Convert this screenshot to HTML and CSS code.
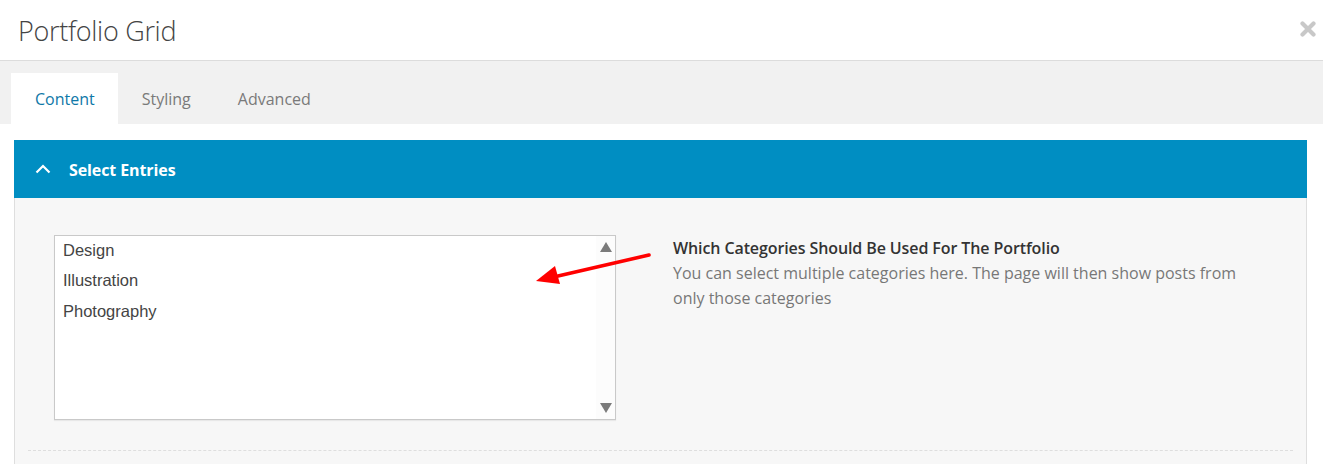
FILE: index.html
```html
<!DOCTYPE html>
<html>
<head>
<meta charset="utf-8">
<link rel="stylesheet" href="styles.css">
</head>
<body>
<div class="header">
  <h1 class="title">Portfolio Grid</h1>
  <svg class="close" width="16" height="16" viewBox="0 0 16 16"><path d="M2.5 2.5 L13.5 13.5 M13.5 2.5 L2.5 13.5" stroke="#c8c8c8" stroke-width="4.2" stroke-linecap="round"/></svg>
</div>
<div class="tabs">
  <div class="tab active">Content</div>
  <div class="tab">Styling</div>
  <div class="tab">Advanced</div>
</div>
<div class="main">
  <div class="section-bar">
    <svg class="chev" width="16" height="10" viewBox="0 0 16 10"><path d="M1.5 8.5 L8 2 L14.5 8.5" fill="none" stroke="#fff" stroke-width="2.2"/></svg>
    <span class="section-title">Select Entries</span>
  </div>
  <div class="panel">
    <div class="row">
      <div class="listbox">
        <div class="options">
          <div class="opt">Design</div>
          <div class="opt">Illustration</div>
          <div class="opt">Photography</div>
        </div>
        <div class="scroll">
          <svg width="12" height="10" viewBox="0 0 12 10"><path d="M6 0 L12 10 L0 10 Z" fill="#7b7b7b"/></svg>
          <svg width="12" height="10" viewBox="0 0 12 10"><path d="M0 0 L12 0 L6 10 Z" fill="#7b7b7b"/></svg>
        </div>
      </div>
      <div class="desc">
        <div class="desc-title">Which Categories Should Be Used For The Portfolio</div>
        <div class="desc-text">You can select multiple categories here. The page will then show posts from only those categories</div>
      </div>
      <svg class="arrow" width="120" height="34" viewBox="0 0 120 34"><path d="M113 3 L22 24" stroke="#f00" stroke-width="3.6" stroke-linecap="round"/><path d="M0 29 L19 14 L24 32 Z" fill="#f00"/></svg>
    </div>
    <div class="divider"></div>
  </div>
</div>
</body>
</html>
```
FILE: styles.css
```css
html, body {
  margin: 0;
  padding: 0;
  background: #fff;
  overflow: hidden;
}
body {
  font-family: "Open Sans", sans-serif;
  width: 1323px;
  height: 464px;
}
.header {
  height: 60px;
  border-bottom: 1px solid #dcdcdc;
  display: flex;
  align-items: center;
  justify-content: space-between;
  padding: 0 7px 0 18px;
  box-sizing: content-box;
}
.title {
  margin: 0;
  font-weight: 300;
  font-size: 27px;
  color: #444;
  letter-spacing: -0.3px;
  padding-bottom: 0;
}
.close {
  margin-bottom: 3px;
}
.tabs {
  background: #f1f1f1;
  height: 51px;
  padding: 12px 0 0 11px;
  display: flex;
}
.tab {
  font-size: 16px;
  color: #7a7a7a;
  padding: 0 23px 0 24px;
  line-height: 53px;
  height: 51px;
  box-sizing: border-box;
}
.tab.active {
  background: #fff;
  color: #0f78a8;
}
.main {
  padding: 16px 16px 0 14px;
}
.section-bar {
  background: #008ec2;
  height: 58px;
  display: flex;
  align-items: center;
  padding-left: 21px;
}
.chev {
  margin-right: 18px;
  margin-bottom: 1px;
}
.section-title {
  color: #fff;
  font-weight: 700;
  font-size: 16px;
  letter-spacing: -0.1px;
  padding-top: 2px;
}
.panel {
  background: #f7f7f7;
  border-left: 1px solid #dedede;
  border-right: 1px solid #dedede;
  padding: 37px 13px 0 13px;
  height: 240px;
}
.row {
  display: flex;
  padding-left: 26px;
  position: relative;
}
.listbox {
  width: 560px;
  height: 183px;
  background: #fff;
  border: 1px solid #c9c9c9;
  box-shadow: 0 1px 1px rgba(0,0,0,0.06);
  display: flex;
}
.options {
  flex: 1;
  padding: 0 0 0 8px;
}
.opt {
  font-family: "Liberation Sans", Arial, sans-serif;
  font-size: 16.5px;
  color: #444;
  line-height: 30.5px;
}
.opt:first-child {
  line-height: 29px;
}
.scroll {
  width: 19px;
  background: #fcfcfc;
  display: flex;
  flex-direction: column;
  justify-content: space-between;
  align-items: center;
  padding: 6px 0 6px 0;
  box-sizing: border-box;
}
.desc {
  margin-left: 57px;
  width: 590px;
  padding-top: 1px;
}
.desc-title {
  font-weight: 600;
  font-size: 16px;
  color: #333;
  line-height: 25px;
  letter-spacing: -0.1px;
}
.desc-text {
  font-size: 16px;
  color: #777;
  line-height: 25px;
}
.arrow {
  position: absolute;
  left: 508px;
  top: 17px;
}
.divider {
  margin-top: 30px;
  border-top: 1px dashed #dedede;
}
```
